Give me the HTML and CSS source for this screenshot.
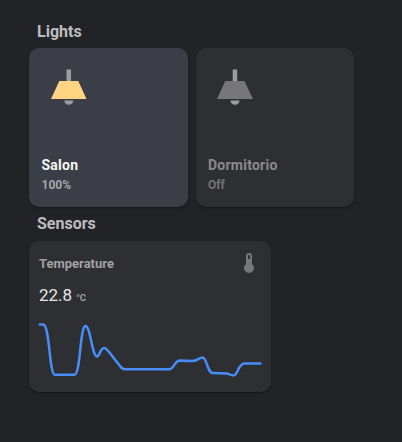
FILE: index.html
```html
<!DOCTYPE html>
<html lang="en">
<head>
<meta charset="utf-8">
<title>Home</title>
<link rel="stylesheet" href="styles.css">
</head>
<body>
<main class="dashboard">
  <h2 class="heading">Lights</h2>
  <div class="lights">
    <section class="card light light-on">
      <svg class="lamp" viewBox="0 0 36 36"><path class="fitting" d="M15.500 .5h4.500v12h-4.500zM13.300 31.500h9a4.500 4.300 0 0 1-9 0z"/><path class="shade" d="M8.300 12h19L35.500 30H0z"/></svg>
      <div class="name">Salon</div>
      <div class="state">100%</div>
    </section>
    <section class="card light">
      <svg class="lamp" viewBox="0 0 36 36"><path class="fitting" d="M15.700 .5h4.500v12h-4.500zM13.500 31.500h9a4.500 4.300 0 0 1-9 0z"/><path class="shade" d="M8.300 12h19.200L36 30H0z"/></svg>
      <div class="name">Dormitorio</div>
      <div class="state">Off</div>
    </section>
  </div>
  <h2 class="heading">Sensors</h2>
  <section class="card sensor">
    <div class="sensor-head">
      <span class="sensor-name">Temperature</span>
      <svg class="thermometer" viewBox="0 0 24 24"><path d="M15 13V5a3 3 0 0 0-6 0v8a5 5 0 1 0 6 0M12 4a1 1 0 0 1 1 1v3h-2V5a1 1 0 0 1 1-1"/></svg>
    </div>
    <div class="reading"><span class="value">22.8</span><span class="unit">°C</span></div>
    <svg class="chart" viewBox="0 0 242 76"><path d="M10.800 9.500H14C21 9.500 20 59.700 26 59.700H45.500C51.500 59.700 51 11 56.500 11C61.500 11 63 41.500 68 41.500C70.500 41.500 71 33 75.500 33C78 33 82 40 91 51Q93 54.200 96 54.200H140.500C145 54.200 145.500 45.500 151 45.500C156 46 160 46 163 46C169 46 170 42.500 173.500 42.500C178 42.500 178 58 184 58C190 58.300 194 58 198 58.500C201 59 201 60.500 204.500 60.500C209 60.500 209 48.500 215.500 48.500H231.500"/></svg>
  </section>
</main>
</body>
</html>
```
FILE: styles.css
```css
* {
  box-sizing: border-box;
}

body {
  margin: 0;
  height: 442px;
  background: #222327;
  font-family: Roboto, "Liberation Sans", sans-serif;
}

.dashboard {
  padding: 15px 48px 0 29px;
}

.heading {
  margin: 0;
  padding-left: 8px;
  height: 33px;
  font-size: 16px;
  line-height: 33px;
  font-weight: 700;
  color: #bdbdbf;
}

.lights {
  display: grid;
  grid-template-columns: 159px 158px;
  gap: 8px;
}

.card {
  background: #2e2f33;
  border-radius: 10px;
  box-shadow: 0 1px 2px rgba(0, 0, 0, .4);
}

.light {
  height: 159px;
  padding: 21px 12px 0;
  color: #8a8a8d;
}

.light-on {
  padding-left: 12.500px;
  background: #3b3e46;
  color: #f7f7f8;
}

.lamp {
  display: block;
  width: 36px;
  height: 36px;
  margin: 0 0 50px 9px;
}

.fitting {
  fill: #9b9da1;
}

.shade {
  fill: #77767b;
}

.light-on .shade {
  fill: #ffd482;
}

.name {
  font-size: 14px;
  line-height: 20px;
  font-weight: 700;
  letter-spacing: .24px;
}

.state {
  font-size: 12px;
  line-height: 20px;
  font-weight: 700;
  color: #737376;
}

.light-on .state {
  color: #a4a6ab;
}

.sensor {
  width: 242px;
  height: 151px;
  margin-top: 1px;
  overflow: hidden;
}

.sensor-head {
  display: flex;
  justify-content: space-between;
  align-items: center;
  height: 44px;
  padding: 0 10px;
}

.sensor-name {
  font-size: 13px;
  font-weight: 700;
  color: #a2a2a4;
}

.thermometer {
  width: 24px;
  height: 24px;
  fill: #77767b;
}

.reading {
  display: flex;
  align-items: baseline;
  gap: 4px;
  height: 30px;
  padding: 0 10px;
  line-height: 20px;
}

.value {
  font-size: 17px;
  color: #e6e6e7;
}

.unit {
  font-size: 9.500px;
  font-weight: 700;
  color: #a2a2a4;
}

.chart {
  display: block;
  width: 242px;
  height: 76px;
  fill: none;
  stroke: #488ef8;
  stroke-width: 2.500px;
  stroke-linecap: round;
  stroke-linejoin: round;
}
```
